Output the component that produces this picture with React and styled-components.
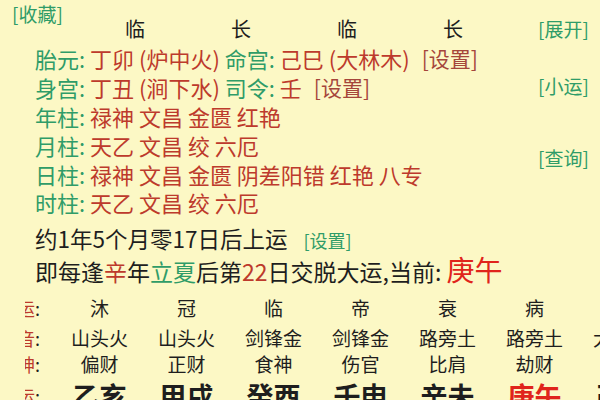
import React from 'react'
import styled, { createGlobalStyle } from 'styled-components'

const Global = createGlobalStyle`
  html, body { margin: 0; padding: 0; background: #fcf8c5; }
`

const GREEN = '#2f9c68'
const RED = '#bd3a2c'

const Page = styled.div`
  width: 600px;
  height: 400px;
  overflow: hidden;
  background: #fcf8c5;
  color: #1e1e1e;
  font-family: "Noto Sans CJK SC", "Noto Sans", sans-serif;
`
const Top = styled.div`
  display: flex;
`
const Main = styled.div`
  flex: 1;
`
const Side = styled.div`
  width: 62px;
  display: flex;
  flex-direction: column;
  align-items: flex-start;
`
const SideLink = styled.div`
  margin-top: ${p => p.$top}px;
  color: ${GREEN};
  font-size: 19px;
  line-height: 24px;
`
const Header = styled.div`
  display: grid;
  grid-template-columns: 82px repeat(4, 106px);
  height: 42px;
`
const Fav = styled.div`
  align-self: start;
  margin-top: 2px;
  padding-left: 12px;
  color: ${GREEN};
  font-size: 19px;
  line-height: 24px;
`
const Head = styled.div`
  align-self: end;
  text-align: center;
  font-size: 20px;
  line-height: 26px;
`
const Info = styled.div`
  padding: 2px 0 0 35px;
`
const Row = styled.div`
  display: flex;
  align-items: center;
  height: 28.8px;
  line-height: 28px;
  font-size: 22px;
  white-space: pre;
`
const Key = styled.span`
  color: ${GREEN};
`
const Val = styled.span`
  color: ${RED};
`
const SetBtn = styled.span`
  color: ${p => (p.$green ? GREEN : '#a5463b')};
  font-size: ${p => (p.$green ? 18 : 21)}px;
  margin-left: ${p => p.$gap || 0}px;
`
const Line = styled.div`
  display: flex;
  align-items: baseline;
  height: ${p => p.$h}px;
  line-height: ${p => p.$h}px;
  font-size: ${p => p.$fs}px;
  margin-top: ${p => p.$mt || 0}px;
  white-space: pre;
`
const Hi = styled.span`
  color: ${p => p.$c};
  font-size: ${p => p.$size || 23}px;
`
const Grid = styled.div`
  display: grid;
  grid-template-columns: 34px repeat(7, 87px);
  padding: 8px 0 0 22px;
`
const Label = styled.div`
  height: ${p => p.$h}px;
  margin-left: 3px;
  display: flex;
  justify-content: flex-end;
  align-items: center;
  overflow: hidden;
  padding-right: 16px;
  white-space: nowrap;
  font-size: 18px;
  color: ${RED};
  & b { color: #1e1e1e; font-weight: normal; }
`
const Cell = styled.div`
  height: ${p => p.$h}px;
  display: flex;
  justify-content: center;
  align-items: center;
  white-space: nowrap;
  font-size: ${p => (p.$big ? 27 : 19)}px;
  font-weight: ${p => (p.$big ? 700 : 400)};
  color: ${p => (p.$red ? '#e0241b' : '#1e1e1e')};
`

const rows = [
  { label: '星运', h: 30, items: ['沐', '冠', '临', '帝', '衰', '病', '死'] },
  { label: '纳音', h: 30, items: ['山头火', '山头火', '剑锋金', '剑锋金', '路旁土', '路旁土', '大林木'] },
  { label: '十神', h: 22, items: ['偏财', '正财', '食神', '伤官', '比肩', '劫财', '偏印'] },
  { label: '大运', h: 42, big: true, items: ['乙亥', '甲戌', '癸酉', '壬申', '辛未', '庚午', '己巳'] },
]

export default function App() {
  return (
    <Page>
      <Global />
      <Top>
        <Main>
          <Header>
            <Fav>[收藏]</Fav>
            <Head>临</Head>
            <Head>长</Head>
            <Head>临</Head>
            <Head>长</Head>
          </Header>
          <Info>
            <Row>
              <Key>胎元: </Key><Val>丁卯 (炉中火) </Val>
              <Key>命宫: </Key><Val>己巳 (大林木)</Val>
              <SetBtn $gap={12}>[设置]</SetBtn>
            </Row>
            <Row>
              <Key>身宫: </Key><Val>丁丑 (涧下水) </Val>
              <Key>司令: </Key><Val>壬</Val>
              <SetBtn $gap={12}>[设置]</SetBtn>
            </Row>
            <Row><Key>年柱: </Key><Val>禄神 文昌 金匮 红艳</Val></Row>
            <Row><Key>月柱: </Key><Val>天乙 文昌 绞 六厄</Val></Row>
            <Row><Key>日柱: </Key><Val>禄神 文昌 金匮 阴差阳错 红艳 八专</Val></Row>
            <Row><Key>时柱: </Key><Val>天乙 文昌 绞 六厄</Val></Row>
            <Line $fs={22.5} $h={30} $mt={6}>
              约1年5个月零17日后上运
              <SetBtn $green $gap={16}>[设置]</SetBtn>
            </Line>
            <Line $fs={23} $h={32}>
              即每逢<Hi $c={RED}>辛</Hi>年<Hi $c={GREEN}>立夏</Hi>后第<Hi $c={RED}>22</Hi>日交脱大运,当前: <Hi $c="#e0241b" $size={28}>庚午</Hi>
            </Line>
          </Info>
        </Main>
        <Side>
          <SideLink $top={17}>[展开]</SideLink>
          <SideLink $top={33}>[小运]</SideLink>
          <SideLink $top={48}>[查询]</SideLink>
        </Side>
      </Top>
      <Grid>
        {rows.map(r => (
          <React.Fragment key={r.label}>
            <Label $h={r.h}>{r.label}<b>:</b></Label>
            {r.items.map((it, i) => (
              <Cell key={i} $h={r.h} $big={r.big} $red={r.big && it === '庚午'}>{it}</Cell>
            ))}
          </React.Fragment>
        ))}
      </Grid>
    </Page>
  )
}
